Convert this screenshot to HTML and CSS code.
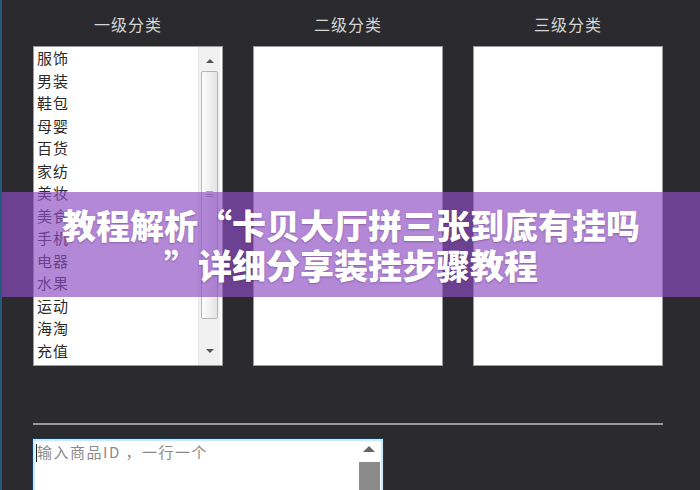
FILE: index.html
```html
<!DOCTYPE html>
<html lang="zh-CN">
<head>
  <meta charset="UTF-8" />
  <title>教程解析 – 分类选择</title>
  <link rel="stylesheet" href="styles.css">
</head>
<body>

<div class="window">
  <div class="columns">
    <div class="column">
      <div class="col-title">一级分类</div>
      <div class="listbox">
        <ul class="items">
          <li>服饰</li>
          <li>男装</li>
          <li>鞋包</li>
          <li>母婴</li>
          <li>百货</li>
          <li>家纺</li>
          <li>美妆</li>
          <li>美食</li>
          <li>手机</li>
          <li>电器</li>
          <li>水果</li>
          <li>运动</li>
          <li>海淘</li>
          <li>充值</li>
        </ul>
        <div class="vscroll">
          <span class="arrow up"></span>
          <span class="thumb"><span class="grip">≡</span></span>
          <span class="arrow down"></span>
        </div>
      </div>
    </div>
    <div class="column">
      <div class="col-title">二级分类</div>
      <div class="listbox"></div>
    </div>
    <div class="column">
      <div class="col-title">三级分类</div>
      <div class="listbox"></div>
    </div>
  </div>

  <hr class="divider">

  <div class="idbox">
    <div class="idtext"><span class="caret"></span><span class="placeholder">输入商品ID ，一行一个</span></div>
    <div class="idscroll">
      <span class="arrow up dark"></span>
      <span class="idthumb"></span>
    </div>
  </div>
</div>

<div class="banner">
  <h1>
    <span>教程解析“卡贝大厅拼三张到底有挂吗</span>
    <span>”详细分享装挂步骤教程</span>
  </h1>
</div>

</body>
</html>
```

FILE: styles.css
```css
body {
  margin: 0;
  background: #2b2a2e;
  font-family: "Noto Sans CJK SC", "Noto Sans", sans-serif;
  height: 490px;
  overflow: hidden;
  position: relative;
  border-left: 2px solid #245a7e;
  box-sizing: border-box;
}
.window {
  padding-left: 31px;
}
.columns {
  display: flex;
  gap: 30px;
}
.column {
  width: 190px;
}
.col-title {
  color: #d6d6d6;
  font-size: 16px;
  letter-spacing: 1px;
  line-height: 20px;
  text-align: center;
  padding-top: 14px;
  margin-bottom: 12px;
}
.listbox {
  height: 318px;
  background: #fff;
  border: 1px solid #9b9b9b;
  display: flex;
}
.items {
  list-style: none;
  margin: 0;
  padding: 0 0 0 3px;
  flex: 1;
  font-size: 15px;
  letter-spacing: 1px;
  line-height: 22.5px;
  color: #2a2a2a;
}

/* classic scrollbar on the first list */
.vscroll {
  width: 21px;
  margin-right: 2px;
  background: #f1f1f1;
  border-left: 1px solid #e6e6e6;
  display: flex;
  flex-direction: column;
  align-items: center;
}
.arrow {
  width: 0;
  height: 0;
  border-left: 4px solid transparent;
  border-right: 4px solid transparent;
  margin: 12px 0 8px;
}
.arrow.up {
  border-bottom: 4px solid #555;
}
.arrow.down {
  border-top: 4px solid #555;
  margin: auto 0 12px;
}
.thumb {
  width: 17px;
  height: 248px;
  box-sizing: border-box;
  border: 1px solid #b5b5b5;
  border-radius: 2px;
  background: linear-gradient(to right, #fdfdfd, #e4e4e4);
  display: flex;
  align-items: center;
  justify-content: center;
}
.grip {
  color: #999;
  font-size: 10px;
  line-height: 1;
  margin-bottom: 2px;
}

.divider {
  width: 630px;
  margin: 57px 0 14px;
  border: 0;
  height: 2px;
  background: #9a9a9a;
}

.idbox {
  width: 350px;
  height: 60px;
  box-sizing: border-box;
  background: #fff;
  border: 2px solid #c6ecfb;
  outline: 1px solid #1b3c58;
  display: flex;
}
.idtext {
  flex: 1;
  padding: 1px 0 0 1px;
  font-size: 15px;
  letter-spacing: 1.5px;
  line-height: 20px;
  color: #8a8a8a;
  display: flex;
  align-items: flex-start;
}
.caret {
  width: 1px;
  height: 18px;
  background: #222;
  margin-top: 2px;
}
.idscroll {
  width: 22px;
  margin-right: 1px;
  display: flex;
  flex-direction: column;
  align-items: center;
}
.arrow.dark {
  border-bottom-color: #666;
  border-left-width: 6px;
  border-right-width: 6px;
  border-bottom-width: 6px;
  margin: 5px 0 10px;
}
.idthumb {
  width: 21px;
  flex: 1;
  background: #8b8b8b;
}

/* title ribbon across the middle */
.banner {
  position: absolute;
  left: 0;
  right: 0;
  top: 192px;
  height: 105px;
  background: rgba(141, 77, 194, 0.67);
  display: flex;
  align-items: center;
  justify-content: center;
}
.banner h1 {
  margin: 0;
  color: #fff;
  font-size: 34px;
  font-weight: 900;
  line-height: 40px;
  text-align: center;
  text-shadow: 0 1px 2px rgba(60, 20, 80, 0.35);
}
.banner h1 span {
  display: block;
}
```
